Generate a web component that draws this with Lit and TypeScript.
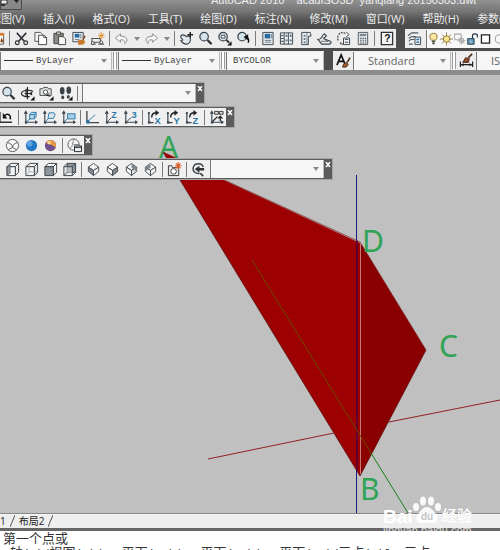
import { LitElement, html, svg, css, TemplateResult, SVGTemplateResult } from "lit";
import { customElement, property } from "lit/decorators.js";

const INK = "#39434d";
const BLUE = "#2a78a8";

const ucsAxes = svg`<path d="M3 2v11h12M3 13l1-1M1.500 4L3 1.500 4.500 4M13 11.500L15 13l-2 1.500" fill="none" stroke=${INK} stroke-width="1.200"/><rect x="2" y="12" width="2.500" height="2.500" fill=${INK}/>`;
const turnArrow = svg`<path d="M5 8c0-4 2-5 5-5" fill="none" stroke="#222" stroke-width="1.500"/><path d="M9 0l4 3-4 3z" fill="#222"/>`;
const axisLetter = (c: string) => svg`<path d="M2 2v11.500h5" fill="none" stroke=${INK} stroke-width="1.300"/><path d="M.5 4L2 1.500 3.500 4zM1 12h2.500v2.500H1z" fill=${INK}/>${turnArrow}<text x="8" y="15" font-size="10" font-weight="bold" font-family="Liberation Sans, sans-serif" fill=${BLUE}>${c}</text>`;
const lens = svg`<circle cx="6.500" cy="6" r="4.500" fill="#d5e3ec" stroke=${INK} stroke-width="1.300"/>`;
const cube = (front: string, side: string, top: string) => svg`<g stroke="#3c4248" stroke-width="1" stroke-linejoin="round"><path d="M2 5l4-3.500h8.500L11 5z" fill=${top}/><path d="M11 5l3.500-3.500V11L11 14.500z" fill=${side}/><path d="M2 5h9v9.500H2z" fill=${front}/></g>`;
const iso = (top: string, left: string, right: string) => svg`<g stroke="#444b52" stroke-width="1" stroke-linejoin="round"><path d="M8 1.500l5.500 4L8 9 2.500 5.500z" fill=${top}/><path d="M2.500 5.500L8 9v5.500L2.500 10z" fill=${left}/><path d="M13.500 5.500L8 9v5.500l5.500-4.500z" fill=${right}/></g>`;
const flyout = svg`<path d="M15.500 11v4.500H11z" fill="#111"/>`;

const icons: Record<string, SVGTemplateResult> = {
  brushEdge: svg`<path d="M7 3h7.500v11H7" fill="#fff" stroke="#555"/><path d="M8 2h7v3H8z" fill="#d9772b"/><path d="M12 7l3 5h-4z" fill="#8a4a22"/>`,
  cut: svg`<path d="M3 2l8 9M13 2L5 11" stroke="#2f3338" stroke-width="1.700"/><circle cx="3.500" cy="12.500" r="2" fill="none" stroke="#2f3338" stroke-width="1.300"/><circle cx="12.500" cy="12.500" r="2" fill="none" stroke="#2f3338" stroke-width="1.300"/>`,
  copy: svg`<path d="M2 1.500h6l2 2V11H2z" fill="#f4f4f4" stroke="#555"/><path d="M6 4.500h6l2.500 2.500v7.500H6z" fill="#fff" stroke="#444"/><path d="M11.500 4.500V7h3" fill="none" stroke="#444"/>`,
  paste: svg`<path d="M2 2.500h10v11H2z" fill="#8a8a84" stroke="#444"/><path d="M5 1h4v3H5z" fill="#ccc" stroke="#444"/><path d="M7 6h5l2.500 2.500v6H7z" fill="#f6f6f6" stroke="#444"/>`,
  match: svg`<path d="M2 1.500h11v10H2z" fill="#e8eef3" stroke=${INK}/><path d="M4 3h5v4H4z" fill="#2b6aa0"/><path d="M4 9h5M10.500 3v5" stroke="#6d7c88"/><path d="M7 10l5-1 3 2-1 3-6 1z" fill="#c77a2e"/><path d="M13 9l2-4" stroke="#774018" stroke-width="1.500"/>`,
  block: svg`<path d="M2 8h9v4H2zM1 14h5M9 14h6" fill="none" stroke="#555" stroke-width="1.200"/><circle cx="3" cy="13" r="1.500" fill="#fff" stroke="#444"/><circle cx="12" cy="12" r="1.500" fill="#fff" stroke="#444"/><path d="M12 1v8M8.500 5h7M9.500 2.500l5 5M14.500 2.500l-5 5" stroke="#e0912f"/>`,
  undo: svg`<path d="M7 3L1.500 7.500 7 12V9.500c4-.5 5 1 4.500 4 4-3 3-8-4.500-8z" fill="#f7f7f7" stroke="#858c92"/>`,
  redo: svg`<path d="M9 3l5.500 4.500L9 12V9.500c-4-.5-5 1-4.500 4-4-3-3-8 4.500-8z" fill="#f7f7f7" stroke="#858c92"/>`,
  pan: svg`<path d="M2 5c3-2 5 0 6 1l2-1 2 2c1 4-1 7-4 7-3 0-5-2-6-4l2-.5L2 7z" fill="#e2e7ea" stroke=${INK} stroke-width="1.200"/><path d="M9 4h6M12 1v6" stroke="#222" stroke-width="1.500"/>`,
  zoom: svg`${lens}<path d="M10 9.500l4.500 4.500" stroke="#2f3338" stroke-width="2.300"/>`,
  zoomWindow: svg`${lens}<path d="M4.500 4.500h4v3h-4z" fill="#fff" stroke=${INK}/><path d="M10 9.500l3 3" stroke="#333" stroke-width="2"/>${flyout}`,
  zoomPrev: svg`${lens}<path d="M13 10l-5-3.500 5-3z" fill="#111"/><path d="M11 6.500c3 1 3 3 2 6" fill="none" stroke="#111" stroke-width="1.500"/>`,
  props: svg`<path d="M3 1.500h11v13H3z" fill="#eef1f3" stroke=${INK}/><path d="M5 3h6v5H5z" fill="#2b6aa0"/><path d="M5 10h7M5 12h7M12.500 3v5" stroke="#657482"/>`,
  center: svg`<path d="M1.500 2h13v12h-13z" fill="#eef1f3" stroke=${INK}/><path d="M5.500 2v12M10 2v12M2 5h3M2 8h3M2 11h3" stroke=${INK}/><path d="M7 4h2v2H7zM11.500 4h2v2h-2zM7 9h2v2H7zM11.500 9h2v2h-2z" fill="#54687a"/>`,
  palettes: svg`<path d="M4 1.500h9l1 4h-3v9H4z" fill="#eef1f3" stroke=${INK}/><path d="M6 4h2v2H6zM6 7.500h2v2H6zM6 11h2v2H6z" fill="#6e7e8c"/><path d="M9.500 2v12" stroke="#7b858e"/>`,
  sheets: svg`<path d="M1 9c4 1 4-5 7-6l2 2-3 3 7 3c2 1 1 3-1 3H5z" fill="#eceff1" stroke=${INK} stroke-width="1.200"/><path d="M4 11h8M6 7l5 4" stroke="#666"/>`,
  markup: svg`<path d="M3 4c1-3 6-3 7-1M2 5v6M5 12v2h3" fill="none" stroke="#555" stroke-width="1.500" stroke-dasharray="2 1"/><path d="M8 7.500h6.500v7H8z" fill="#eef1f3" stroke=${INK}/><path d="M9.500 9h3.500M9.500 12h3.500" stroke=${INK}/><path d="M11 1l3 3-3 2" fill="none" stroke="#444"/>`,
  calc: svg`<path d="M3.500 1.500h10v13h-10z" fill="#e6eaed" stroke="#525b63"/><path d="M5 3h7v2.500H5z" fill="#7d8b96"/><path d="M5.500 8h1.500M8 8h1.500M10.500 8H12M5.500 10.500H7M8 10.500h1.500M10.500 10.500H12M5.500 13H7M8 13h1.500M10.500 13H12" stroke="#525b63" stroke-width="1.400"/>`,
  help: svg`<path d="M2.500 1.500h12v13h-12z" fill="#f5f5f5" stroke="#333" stroke-width="1.400"/><text x="5.500" y="12" font-size="11" font-weight="bold" font-family="Liberation Sans, sans-serif" fill="#111">?</text>`,
  layers: svg`<path d="M1 5l4-3h7M2 8l3-2h4M2 11l2-2h4M2 14h4" fill="none" stroke="#525b63" stroke-width="1.200"/><path d="M8.500 6.500h6v8h-6z" fill="#eef1f3" stroke=${INK}/><path d="M10 9h3M10 12h3" stroke=${BLUE} stroke-width="1.500"/>`,
  bulb: svg`<path d="M8 1c-6 0-5 6-2.500 8.500h5C13 7 14 1 8 1z" fill="#ffe9a0" stroke="#77652a"/><path d="M6 11h4M6.500 13.500h3" stroke="#444" stroke-width="2"/>`,
  sun: svg`<path d="M8 0v16M0 8h16M2.500 2.500l11 11M13.500 2.500l-11 11" stroke="#7d6a2e"/><circle cx="8" cy="8" r="4" fill="#ffe48a" stroke="#77652a"/>`,
  freeze: svg`<path d="M2 2h8v7H2z" fill="none" stroke="#aaa" stroke-width="1.300"/><circle cx="10.500" cy="10" r="3" fill="#ddd" stroke="#999"/><path d="M10.500 5v10M5.500 10h10M7 6.500l7 7" stroke="#aaa"/>`,
  lock: svg`<path d="M2 7.500h8v7H2z" fill="#5e9ab5" stroke="#234"/><path d="M8 7V4c0-3 6-3 6 0v2" fill="none" stroke="#234" stroke-width="1.400"/><path d="M6 10v2.500" stroke="#fff"/>`,
  swatch: svg`<path d="M3 3h10v10H3z" fill="#fff" stroke="#222" stroke-width="1.600"/>`,
  ring: svg`<circle cx="9" cy="8" r="5" fill="none" stroke="#888"/>`,
  textStyle: svg`<path d="M1 13L5.500 2 10 13M3 9h5" fill="none" stroke="#111" stroke-width="1.800"/><path d="M8 12l3-2 2 2-2 3H7z" fill="#a35a2e" stroke="#4a2818"/><path d="M12 10l3-5" stroke="#4a2818" stroke-width="1.700"/>`,
  dimStyle: svg`<path d="M1.500 9v6M14.500 9v6M2 12.500h12" stroke="#222" stroke-width="1.300"/><path d="M2 12.500l3-1.500v3zM14 12.500L11 11v3z" fill="#222"/><path d="M4 10l3-5 4 1-1 4z" fill="#8d4b25" stroke="#4a2818"/><path d="M10 5l4-4" stroke="#4a2818" stroke-width="1.700"/>`,
  orbit: svg`<path d="M14 6C12 4 2 4 1.500 8c0 3 6 4 9 3" fill="none" stroke="#333" stroke-width="1.300"/><path d="M8 1v13M6.500 3v9M5 8h7" fill="none" stroke="#222" stroke-width="1.200"/><path d="M9 8l4-2v4z" fill="#222"/>${flyout}`,
  camera: svg`<path d="M1 3h3l1-1.500h4L10 3h3v7H1z" fill="#e2e5e8" stroke="#444"/><circle cx="7" cy="6.500" r="2.300" fill="#fff" stroke="#444"/><path d="M11 8l-3 2 4 1" fill="none" stroke="#222"/>${flyout}`,
  walk: svg`<ellipse cx="4.500" cy="5" rx="2.500" ry="4" fill="#3c4248"/><ellipse cx="5" cy="12" rx="1.600" ry="2" fill="#3c4248"/><ellipse cx="11.500" cy="4.500" rx="2.500" ry="4" fill="#3c4248"/><ellipse cx="11" cy="11.500" rx="1.600" ry="2" fill="#3c4248"/>${flyout}`,
  ucsPrev: svg`<path d="M1 2v11h13" fill="none" stroke="#333" stroke-width="1.500"/><path d="M6 6c3-3 7-1 6 4" fill="none" stroke="#111" stroke-width="1.600"/><path d="M4 3v6h5z" fill="#111"/>`,
  ucsFace: svg`${ucsAxes}<path d="M7 5l2-2.500h5V7l-2 2.500H7z" fill="#bdd9ea" stroke=${BLUE}/><path d="M7 5h5v4.500M12 5l2-2.500M3 13l5-4" fill="none" stroke=${BLUE}/>`,
  ucsObject: svg`${ucsAxes}<path d="M6.500 8l1-5H13l1 2-2 4H6.500z" fill="#d7e6ee" stroke=${BLUE}/><path d="M3 13l4-4" stroke=${BLUE}/>`,
  ucsView: svg`${ucsAxes}<path d="M7 4h8v5.500H7z" fill="#a8cfe8" stroke=${BLUE}/><path d="M3 13l4-4" stroke=${BLUE}/>`,
  ucsOrigin: svg`<path d="M2 1v12.500h13" fill="none" stroke="#444" stroke-width="1.400"/><path d="M3 12l8-7" stroke="#7aa9c4" stroke-width="1.200"/><circle cx="3" cy="12.500" r="2" fill=${BLUE}/>`,
  ucsZ: svg`${ucsAxes}<path d="M3 13l5-5" stroke="#555"/><text x="8" y="8" font-size="9" font-weight="bold" font-family="Liberation Sans, sans-serif" fill=${BLUE}>Z</text>`,
  ucs3: svg`${ucsAxes}<path d="M3 13l6-5" stroke="#555"/><text x="9" y="8.500" font-size="10" font-weight="bold" font-family="Liberation Sans, sans-serif" fill=${BLUE}>3</text>`,
  ucsX: axisLetter("X"),
  ucsY: axisLetter("Y"),
  ucsRotZ: axisLetter("Z"),
  ucsApply: svg`${ucsAxes}<path d="M6 1.500h4v3H6zM11 1.500h4v3h-4z" fill="#ddd" stroke="#333"/><path d="M4 12l5-5M12 12V8" fill="none" stroke="#222" stroke-width="1.300"/><path d="M9 9l3-3.500L15 9z" fill="#222"/>`,
  wire: svg`<circle cx="8" cy="8" r="6.500" fill="#fafafa" stroke="#555"/><path d="M2.500 5c3 0 5 2 5.500 5M13.500 5c-3 0-5 2-5.500 5M3.500 12.500L8 10l4.500 2.500" fill="none" stroke="#555"/>`,
  ballBlue: svg`<circle cx="8" cy="8" r="6" fill="#2378c4"/><circle cx="6" cy="6" r="3" fill="#5ba4df"/>`,
  ballGold: svg`<circle cx="8" cy="8" r="6" fill="#70508a"/><path d="M8 2a6 6 0 0 1 5.500 8C11 8 8 7 3 5c1-2 3-3 5-3z" fill="#e69a3c"/><circle cx="6.500" cy="5" r="1.800" fill="#ffd99a"/>`,
  styleManager: svg`<circle cx="7" cy="7" r="6" fill="#f5f5f5" stroke="#555"/><path d="M8 1c-3 4-1 8-5 10M7 7h6" fill="none" stroke="#777"/><path d="M8 8.500h7.500v6H8z" fill="#e8edf1" stroke="#222"/><path d="M8 10h7" stroke="#222"/>`,
  cubeL: svg`${cube("#f3f4f5", "#f3f4f5", "#f3f4f5")}<path d="M2.500 5.500L5.500 3v9l-3 2z" fill="#929ba3" stroke="#3c4248" stroke-width=".6"/>`,
  cubeR: svg`${cube("#f3f4f5", "#e3e5e7", "#f3f4f5")}<path d="M5.500 2v8.500H14M2 14.500l3.500-4" fill="none" stroke="#999" stroke-width=".8"/>`,
  cubeFront: cube("#8c959e", "#f3f4f5", "#f3f4f5"),
  cubeBack: svg`<path d="M5.500 1.500h9V11h-9z" fill="#8c959e" stroke="#3c4248"/><path d="M2 5h9v9.500H2z" fill="#dfe3e6" fill-opacity=".5" stroke="#3c4248"/><path d="M2 5l3.500-3.500M11 14.500l3.500-3.500M2 14.500L5.500 11M11 5l3.500-3.500" stroke="#3c4248"/>`,
  isoSW: iso("#f6f6f6", "#7f8992", "#f6f6f6"),
  isoSE: iso("#f6f6f6", "#f6f6f6", "#7f8992"),
  isoNE: svg`${iso("#f6f6f6", "#f6f6f6", "#dde0e2")}<path d="M8 1.500l5.500 4V10L8 6z" fill="#7f8992"/>`,
  isoNW: svg`${iso("#f6f6f6", "#f6f6f6", "#f6f6f6")}<path d="M8 1.500l-5.500 4V10L8 6z" fill="#7f8992"/>`,
  newCamera: svg`<path d="M1.500 4v10.500h11V6H6L5 4z" fill="#e7e9eb" stroke="#333"/><circle cx="7" cy="10" r="3" fill="#fff" stroke="#333"/><path d="M12 0v8M8.500 4h7M9.500 1.500l5 5M14.500 1.500l-5 5" stroke="#d9642a" stroke-width="1.200"/>`,
  lensBack: svg`<path d="M13 5.500C12 1 4 .5 2.500 5.500S6 13 9 12" fill="none" stroke=${INK} stroke-width="1.500"/><path d="M4 7.500L9 4v2.500h5V9H9v2.500z" fill="#2f3338"/><path d="M10 12l3 3" stroke="#333" stroke-width="1.800"/>`,
};

@customElement("tool-button")
class ToolButton extends LitElement {
  @property() icon = "";
  @property() label = "";

  static styles = css`
    :host { display: block; flex: none; width: 19px; height: 18px; }
    button { display: grid; place-items: center; width: 100%; height: 100%; padding: 0; border: 0; background: none; }
    button:hover { background: #dce8f2; }
    svg { width: 15px; height: 15px; overflow: visible; }
  `;

  render() {
    return html`<button aria-label=${this.label || this.icon}><svg viewBox="0 0 16 16" aria-hidden="true">${icons[this.icon]}</svg></button>`;
  }
}

@customElement("combo-box")
class ComboBox extends LitElement {
  @property() value = "";
  @property() label = "";
  @property({ reflect: true }) face = "";
  @property({ type: Boolean }) line = false;

  static styles = css`
    :host { display: flex; align-items: center; box-sizing: border-box; height: 18px; padding: 0 4px 0 3px; background: #f6f6f6; border-left: 1px solid #777; border-right: 1px solid #bbb; overflow: hidden; }
    select { flex: 1; min-width: 0; height: 100%; appearance: none; border: 0; padding: 0 0 0 3px; margin: 0; background: none; color: #444; font: 9px/18px "Liberation Mono", "Noto Sans CJK SC", monospace; }
    :host([face="sans"]) select { padding-left: 11px; font: 11px/18px "Open Sans", "Noto Sans", sans-serif; color: #666; }
    .line { width: 29px; height: 1px; background: #333; flex: none; }
    .arrow { width: 6px; height: 4px; flex: none; }
  `;

  render() {
    return html`${this.line ? html`<span class="line"></span>` : ""}
      <select aria-label=${this.label}><option>${this.value}</option></select>
      <svg class="arrow" viewBox="0 0 6 4" aria-hidden="true"><path d="M0 0h6L3 4z" fill="#8a8a8a" /></svg>`;
  }
}

const drawTools = (names: string[]): TemplateResult[] =>
  names.map((n) => {
    if (n === "|") return html`<span class="sep"></span>`;
    if (n === "v") return html`<button class="drop" aria-label="更多"></button>`;
    return html`<tool-button icon=${n}></tool-button>`;
  });

@customElement("app-root")
class AppRoot extends LitElement {
  static styles = css`
    :host { display: flex; flex-direction: column; position: relative; height: 100vh; min-height: 320px; overflow: hidden; background: #c0c0c0; font-family: "Open Sans", "Noto Sans CJK SC", sans-serif; }
    button { padding: 0; border: 0; background: none; font: inherit; color: inherit; }
    header { flex: none; height: 28px; overflow: hidden; background: linear-gradient(#929292, #767676 40%, #555 70%, #494949); color: #eee; }
    .title { display: flex; height: 10px; }
    .app { flex: none; width: 22px; border: 1px solid #4b4b4b; border-top: 0; background: #888; }
    .app svg { display: block; width: 20px; height: 9px; }
    .caption { flex: 1; margin: -8px 0 0 189px; font: 11px/16px "Liberation Sans", sans-serif; white-space: pre; color: #eee; }
    nav { display: flex; gap: 18px; margin-left: -10px; height: 18px; align-items: center; font-size: 11px; line-height: 16px; white-space: nowrap; }
    nav button { flex: none; }
    .docks { flex: none; display: grid; gap: 3px; padding-top: 1px; background: #4d4d4d; border-bottom: 5px solid #8c8c8c; overflow: hidden; }
    .row { display: flex; height: 19px; gap: 9px; }
    .bar { display: flex; align-items: center; flex: none; background: #ededed; }
    .bar.rest { flex: 1; min-width: 0; overflow: hidden; }
    .standard { margin-left: -12px; }
    .styles { padding-left: 1px; }
    .sep { flex: none; box-sizing: border-box; width: 3px; height: 15px; border-left: 1px solid #7b7b7b; margin-left: 2px; }
    .grip { flex: none; box-sizing: border-box; width: 4px; height: 17px; margin: 0 1px; border: solid #999; border-width: 0 1px; background: #fff; }
    .drop { width: 11px; height: 18px; display: grid; place-items: center; }
    .drop::after { content: ""; border: 3px solid transparent; border-top: 4px solid #888; border-bottom: 0; }
    .w-type { width: 112px; }
    .w-line { width: 102px; }
    .w-color, .w-style { width: 98px; }
    .fill { flex: 1; }
    .layer { display: flex; margin-left: 2px; background: #f8f8f8; border-left: 1px solid #777; height: 18px; }
    .layer svg { width: 13px; height: 14px; padding: 2px 0; flex: none; }
    main { position: relative; flex: 1; min-height: 0; overflow: hidden; border-bottom: 1px solid #858585; }
    .model { position: absolute; inset: 0; width: 100%; height: 100%; }
    .model text { font: 30px "Noto Sans", "Open Sans", sans-serif; fill: #2fa455; }
    .palettes { position: absolute; inset: 8px 0 auto 0; display: flex; flex-direction: column; align-items: flex-start; gap: 8px; }
    .group { display: flex; flex-direction: column; align-items: flex-start; gap: 4px; }
    .palette { display: flex; align-items: center; box-sizing: border-box; height: 20px; background: #f0f0f0; border: solid #5b5b5b; border-width: 1px 0; outline: 1px solid #a5a5a5; }
    .views { margin-left: -1px; }
    .ucs { margin-left: -3px; }
    .visual { padding-left: 3px; }
    .close { width: 8px; height: 18px; background: #5b5b5b; display: flex; justify-content: center; padding-top: 2px; }
    .close svg { width: 6px; height: 6px; }
    .w-view { width: 114px; margin-left: 2px; }
    .tabs { flex: none; display: flex; box-sizing: border-box; height: 17px; background: #eee; border-top: 1px solid #f8f8f8; border-bottom: 3px solid #666; font-size: 10px; line-height: 12px; color: #222; }
    .tabs svg { width: 5px; height: 12px; margin: 0 4px; }
    .tabs button { height: 12px; }
    .command { flex: none; height: 19px; box-sizing: border-box; overflow: hidden; padding: 0 0 0 3px; background: #fff; color: #333; font: 13px/14px "Noto Sans CJK SC", sans-serif; }
    .command p { margin: 0; height: 14px; white-space: pre; }
    .command .prompt { padding-left: 7px; }
    .command code { font: 11px/14px "Liberation Mono", monospace; }
    .mark { position: absolute; right: 26px; bottom: 13px; width: 92px; height: 42px; pointer-events: none; }
    .mark text { fill: #fff; }
    .mark .brand { font: bold 19px "Liberation Sans", sans-serif; }
    .mark .han { font: 500 15px "Noto Sans CJK SC", sans-serif; }
    .mark .url { font: 11px "Liberation Sans", sans-serif; opacity: .8; }
    .mark .du { font: bold 10px "Liberation Sans", sans-serif; fill: #c4c4c4; }
  `;

  private close() {
    return html`<button class="close" aria-label="关闭"><svg viewBox="0 0 6 6"><path d="M1 0l4 5M5 0L1 5" stroke="#fff" stroke-width="1.500" /></svg></button>`;
  }

  private prompt() {
    const parts = ["轴", "(Z)/", "视图", "(V)/XY ", "平面", "(XY)/YZ ", "平面", "(YZ)/ZX ", "平面", "(ZX)/", "三点", "(3)] <", "三点", ">:"];
    return parts.map((p, i) => (i % 2 ? html`<code>${p}</code>` : p));
  }

  render() {
    const menus = ["视图(V)", "插入(I)", "格式(O)", "工具(T)", "绘图(D)", "标注(N)", "修改(M)", "窗口(W)", "帮助(H)", "参数(P)"];
    return html`
      <header>
        <div class="title">
          <button class="app" aria-label="打印"><svg viewBox="0 0 20 9"><path d="M0 0h6v4H0z" fill="#eee" stroke="#333" /><path d="M0 5h4" stroke="#333" stroke-width="2" /><path d="M13 0h5l-2.500 3z" fill="#222" /></svg></button>
          <div class="caption">AutoCAD 2010    acadISO3D  yanqiang 20150303.dwt</div>
        </div>
        <nav>${menus.map((m) => html`<button>${m}</button>`)}</nav>
      </header>
      <div class="docks">
        <div class="row">
          <div class="bar standard">
            ${drawTools(["brushEdge", "|", "cut", "copy", "paste", "match", "block", "|", "undo", "v", "redo", "v", "|", "pan", "zoom", "zoomWindow", "zoomPrev", "|", "props", "center", "palettes", "sheets", "markup", "calc", "|", "help"])}
          </div>
          <div class="bar rest">
            ${drawTools(["layers"])}
            <div class="layer fill">${["bulb", "sun", "freeze", "lock", "swatch", "ring"].map((n) => html`<svg viewBox="0 0 16 16">${icons[n]}</svg>`)}</div>
          </div>
        </div>
        <div class="row">
          <div class="bar">
            <combo-box class="w-type" label="线型" value="ByLayer" line></combo-box><span class="grip"></span>
            <combo-box class="w-line" label="线宽" value="ByLayer" line></combo-box><span class="grip"></span>
            <combo-box class="w-color" label="打印样式" value="BYCOLOR"></combo-box>
          </div>
          <div class="bar rest styles">
            ${drawTools(["textStyle"])}
            <combo-box class="w-style" face="sans" label="文字样式" value="Standard"></combo-box><span class="grip"></span>
            ${drawTools(["dimStyle"])}
            <combo-box class="fill" face="sans" label="标注样式" value="ISO-25"></combo-box>
          </div>
        </div>
      </div>
      <main>
        <svg class="model" viewBox="0 75 500 438" preserveAspectRatio="xMinYMin meet">
          <text x="159" y="158">A</text>
          <path d="M163 152L360 243V476z" fill="#9c0000" />
          <path d="M360 242L426 350 360 476z" fill="#8a0000" />
          <path d="M163 152L360 476M426 350L360 476" fill="none" stroke="#5a0a0a" stroke-width=".7" />
          <path d="M163 152L360 242 426 350" fill="none" stroke="#7a2020" stroke-width=".7" />
          <path d="M208 459L334 433M389 422L500 400" stroke="#932020" fill="none" />
          <path d="M356.500 175V241M356.500 470V513" stroke="#1c1c80" />
          <path d="M357 241V470" stroke="#62002a" stroke-width="2" />
          <path d="M360.500 243V474" stroke="#c87878" />
          <path d="M252 260L371 453" stroke="#6d4a00" />
          <path d="M371 453L408 513" stroke="#128012" />
          <text x="362" y="252">D</text>
          <text x="439" y="357">C</text>
          <text x="360" y="500">B</text>
        </svg>
        <div class="palettes">
          <div class="group">
            <div class="palette views">
              ${drawTools(["zoom", "orbit", "camera", "walk", "|"])}
              <combo-box class="w-view" label="命名视图"></combo-box>${this.close()}
            </div>
            <div class="palette ucs">
              ${drawTools(["ucsPrev", "|", "ucsFace", "ucsObject", "ucsView", "|", "ucsOrigin", "ucsZ", "ucs3", "|", "ucsX", "ucsY", "ucsRotZ", "|", "ucsApply"])}${this.close()}
            </div>
          </div>
          <div class="group">
            <div class="palette visual">
              ${drawTools(["wire", "ballBlue", "ballGold", "|", "styleManager"])}${this.close()}
            </div>
            <div class="palette visual">
              ${drawTools(["cubeL", "cubeR", "cubeFront", "cubeBack", "|", "isoSW", "isoSE", "isoNE", "isoNW", "|", "newCamera", "|", "lensBack"])}
              <combo-box class="w-view" label="相机"></combo-box>${this.close()}
            </div>
          </div>
        </div>
      </main>
      <div class="tabs">
        <button>1</button><svg viewBox="0 0 5 12"><path d="M0 12L5 0" stroke="#555" /></svg>
        <button>布局2</button><svg viewBox="0 0 5 12"><path d="M0 12L5 0" stroke="#555" /></svg>
      </div>
      <div class="command">
        <p>第一个点或</p>
        <p class="prompt">${this.prompt()}</p>
      </div>
      <svg class="mark" viewBox="0 0 92 42" role="img" aria-label="Baidu 经验">
        <g fill="#fff" fill-opacity=".9">
          <ellipse cx="34" cy="12" rx="3" ry="4" /><ellipse cx="41" cy="6" rx="3" ry="4.500" /><ellipse cx="49" cy="6" rx="3" ry="4.500" /><ellipse cx="56" cy="12" rx="3" ry="4" />
          <path d="M45 12c4 0 6 4 9 7 4 4 1 10-4 9-4-1-6-1-10 0-5 1-8-5-4-9 3-3 5-7 9-7z" />
        </g>
        <text class="brand" x="1" y="28">Bai</text>
        <text class="du" x="39" y="25">du</text>
        <text class="han" x="60" y="26">经验</text>
        <text class="url" x="1" y="39">jingyan.baidu.com</text>
      </svg>
    `;
  }
}
